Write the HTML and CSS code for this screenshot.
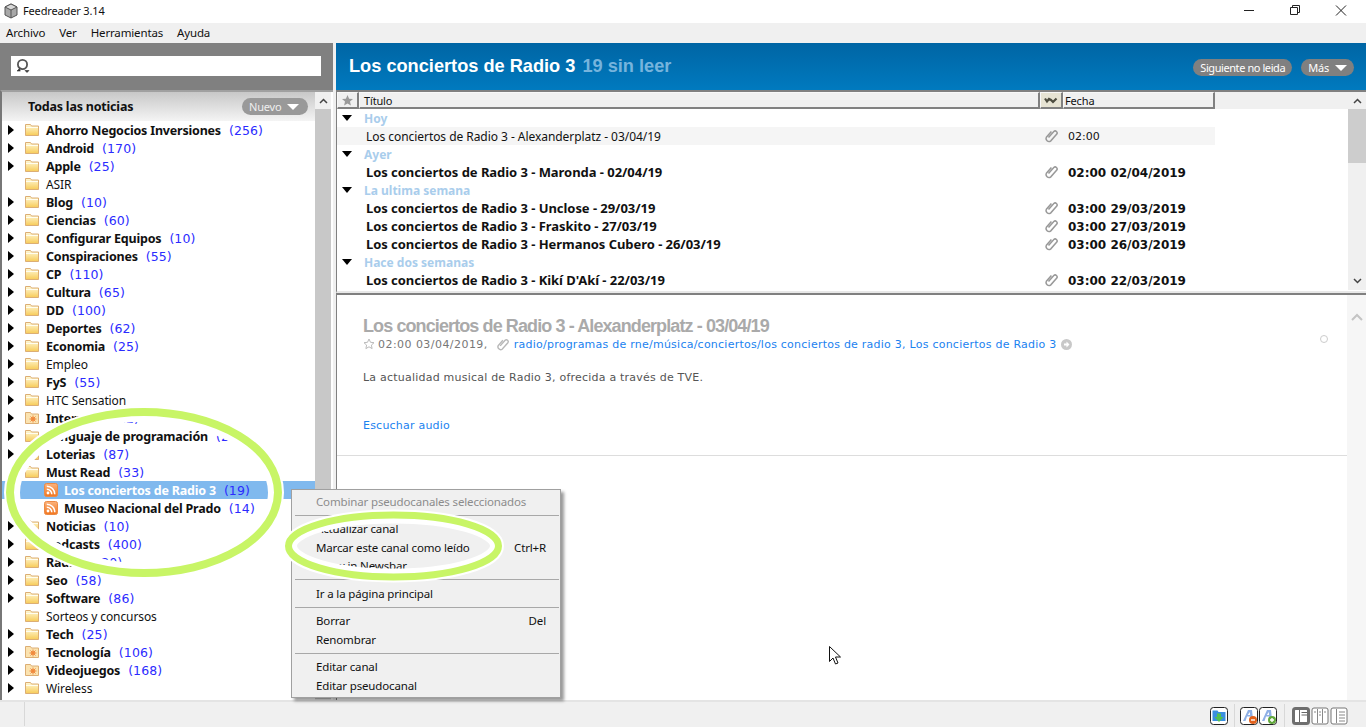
FILE: index.html
```html
<!DOCTYPE html>
<html lang="es">
<head>
    <meta charset="UTF-8">
    <title>Feedreader 3.14</title>
    <link rel="stylesheet" href="styles.css">
</head>
<body>

<svg class="defs" width="0" height="0">
    <defs>
        <linearGradient id="folderFill" x1="0" y1="0" x2="0" y2="1">
            <stop offset="0" stop-color="#fff9d8"/>
            <stop offset="1" stop-color="#f7cb58"/>
        </linearGradient>
        <linearGradient id="rssFill" x1="0" y1="0" x2="0" y2="1">
            <stop offset="0" stop-color="#fbb27c"/>
            <stop offset="1" stop-color="#f2761f"/>
        </linearGradient>
        <symbol id="folder" viewBox="0 0 14 12">
            <path d="M.5 11.500V.5h5l1 1.500h7v9.500z" fill="url(#folderFill)" stroke="#dcae74"/>
            <path d="M1 3.500h12" stroke="#fffdf0"/>
        </symbol>
        <symbol id="folderHot" viewBox="0 0 14 12">
            <path d="M.5 11.500V.5h5l1 1.500h7v9.500z" fill="#fbe3b0" stroke="#dcae74"/>
            <circle cx="8" cy="7" r="1.800" fill="#ee6a1f"/>
            <path d="M8 3.500v7M4.500 7h7M5.500 4.500l5 5M10.500 4.500l-5 5" stroke="#f08a3c"/>
        </symbol>
        <symbol id="rss" viewBox="0 0 14 14">
            <rect x=".5" y=".5" width="13" height="13" rx="2" fill="url(#rssFill)" stroke="#ec8a45"/>
            <circle cx="4" cy="10" r="1.400" fill="#fff"/>
            <path d="M2.800 6.200a5 5 0 0 1 5 5M2.800 3.200a8 8 0 0 1 8 8" fill="none" stroke="#fff" stroke-width="1.500"/>
        </symbol>
        <symbol id="clip" viewBox="0 0 14 14">
            <path d="M3.500 8.500l5.300-6a2 2 0 0 1 3 2.600l-6.200 7a3 3 0 0 1-4.200-3.900l5-5.800" fill="none" stroke="#999" stroke-width="1.500" transform="translate(1 0)"/>
        </symbol>
    </defs>
</svg>

<div class="app">
    <div class="titlebar">
        <svg class="app-icon" width="16" height="16" viewBox="0 0 16 16">
            <path d="M8 1l6 3v8l-6 3-6-3V4z" fill="#a8a8a8" stroke="#555"/>
            <path d="M2 4l6 3 6-3-6-3z" fill="#d8d8d8" stroke="#555"/>
            <path d="M8 7v8" stroke="#555"/>
        </svg>
        <span class="app-title">Feedreader 3.14</span>
        <div class="win-buttons">
            <svg class="win-btn" width="46" height="23" viewBox="0 0 46 23"><path d="M18 10.500h10" stroke="#222"/></svg>
            <svg class="win-btn" width="46" height="23" viewBox="0 0 46 23"><path d="M18.500 7.500h7v7h-7zM20.500 7.500v-2h7v7h-2" fill="none" stroke="#222"/></svg>
            <svg class="win-btn" width="46" height="23" viewBox="0 0 46 23"><path d="M18 5.500l10 10M28 5.500l-10 10" stroke="#222"/></svg>
        </div>
    </div>

    <div class="menubar">
        <span>Archivo</span>
        <span>Ver</span>
        <span>Herramientas</span>
        <span>Ayuda</span>
    </div>

    <div class="main">
        <div class="left">
            <div class="searchbar">
                <div class="searchbox">
                    <svg width="16" height="16" viewBox="0 0 16 16">
                        <circle cx="7.500" cy="6.500" r="4.600" fill="none" stroke="#555" stroke-width="1.800"/>
                        <path d="M4.500 10.500l-2.500 2.500h3.500M10 12.500h4l-2 2z" fill="#333" stroke="#333" stroke-width=".6"/>
                    </svg>
                </div>
            </div>
            <div class="tree-wrap">
                <div class="tree">
                    <div class="tree-head">
                        <span class="tree-title">Todas las noticias</span>
                        <span class="pill pill-new">Nuevo <i class="caret"></i></span>
                    </div>
                    <div class="row bold"><i class="arrow"></i><svg class="folder"><use href="#folder"/></svg>Ahorro Negocios Inversiones<b class="count">(256)</b></div>
                    <div class="row bold"><i class="arrow"></i><svg class="folder"><use href="#folder"/></svg>Android<b class="count">(170)</b></div>
                    <div class="row bold"><i class="arrow"></i><svg class="folder"><use href="#folder"/></svg>Apple<b class="count">(25)</b></div>
                    <div class="row"><i class="noarrow"></i><svg class="folder"><use href="#folder"/></svg>ASIR</div>
                    <div class="row bold"><i class="arrow"></i><svg class="folder"><use href="#folder"/></svg>Blog<b class="count">(10)</b></div>
                    <div class="row bold"><i class="arrow"></i><svg class="folder"><use href="#folder"/></svg>Ciencias<b class="count">(60)</b></div>
                    <div class="row bold"><i class="arrow"></i><svg class="folder"><use href="#folder"/></svg>Configurar Equipos<b class="count">(10)</b></div>
                    <div class="row bold"><i class="arrow"></i><svg class="folder"><use href="#folder"/></svg>Conspiraciones<b class="count">(55)</b></div>
                    <div class="row bold"><i class="arrow"></i><svg class="folder"><use href="#folder"/></svg>CP<b class="count">(110)</b></div>
                    <div class="row bold"><i class="arrow"></i><svg class="folder"><use href="#folder"/></svg>Cultura<b class="count">(65)</b></div>
                    <div class="row bold"><i class="arrow"></i><svg class="folder"><use href="#folder"/></svg>DD<b class="count">(100)</b></div>
                    <div class="row bold"><i class="arrow"></i><svg class="folder"><use href="#folder"/></svg>Deportes<b class="count">(62)</b></div>
                    <div class="row bold"><i class="arrow"></i><svg class="folder"><use href="#folder"/></svg>Economia<b class="count">(25)</b></div>
                    <div class="row"><i class="arrow"></i><svg class="folder"><use href="#folder"/></svg>Empleo</div>
                    <div class="row bold"><i class="arrow"></i><svg class="folder"><use href="#folder"/></svg>FyS<b class="count">(55)</b></div>
                    <div class="row"><i class="arrow"></i><svg class="folder"><use href="#folder"/></svg>HTC Sensation</div>
                    <div class="row bold"><i class="arrow"></i><svg class="folder"><use href="#folderHot"/></svg>Internet<b class="count">(112)</b></div>
                    <div class="row bold"><i class="arrow"></i><svg class="folder"><use href="#folder"/></svg>Lenguaje de programación<b class="count">(21)</b></div>
                    <div class="row bold"><i class="arrow"></i><svg class="folder"><use href="#folder"/></svg>Loterias<b class="count">(87)</b></div>
                    <div class="row bold"><i class="noarrow"></i><svg class="folder"><use href="#folder"/></svg>Must Read<b class="count">(33)</b></div>
                    <div class="row bold child selected"><svg class="rss"><use href="#rss"/></svg>Los conciertos de Radio 3<b class="count">(19)</b></div>
                    <div class="row bold child"><svg class="rss"><use href="#rss"/></svg>Museo Nacional del Prado<b class="count">(14)</b></div>
                    <div class="row bold"><i class="arrow"></i><svg class="folder"><use href="#folder"/></svg>Noticias<b class="count">(10)</b></div>
                    <div class="row bold"><i class="arrow"></i><svg class="folder"><use href="#folder"/></svg>Podcasts<b class="count">(400)</b></div>
                    <div class="row bold"><i class="arrow"></i><svg class="folder"><use href="#folder"/></svg>Radio<b class="count">(120)</b></div>
                    <div class="row bold"><i class="arrow"></i><svg class="folder"><use href="#folder"/></svg>Seo<b class="count">(58)</b></div>
                    <div class="row bold"><i class="arrow"></i><svg class="folder"><use href="#folder"/></svg>Software<b class="count">(86)</b></div>
                    <div class="row"><i class="noarrow"></i><svg class="folder"><use href="#folder"/></svg>Sorteos y concursos</div>
                    <div class="row bold"><i class="arrow"></i><svg class="folder"><use href="#folder"/></svg>Tech<b class="count">(25)</b></div>
                    <div class="row bold"><i class="arrow"></i><svg class="folder"><use href="#folderHot"/></svg>Tecnología<b class="count">(106)</b></div>
                    <div class="row bold"><i class="arrow"></i><svg class="folder"><use href="#folderHot"/></svg>Videojuegos<b class="count">(168)</b></div>
                    <div class="row"><i class="arrow"></i><svg class="folder"><use href="#folder"/></svg>Wireless</div>
                </div>
                <div class="tree-scroll">
                    <div class="scroll-btn">
                        <svg width="9" height="6" viewBox="0 0 9 6"><path d="M1 5l3.500-3.500L8 5" fill="none" stroke="#444" stroke-width="1.500"/></svg>
                    </div>
                    <div class="tree-thumb"></div>
                </div>
            </div>
        </div>

        <div class="right">
            <div class="feed-head">
                <span class="feed-title">Los conciertos de Radio 3</span>
                <span class="feed-unread">19 sin leer</span>
                <span class="pill pill-next">Siguiente no leida</span>
                <span class="pill pill-more">Más <i class="caret"></i></span>
            </div>

            <div class="list-pane">
                <div class="list">
                    <div class="cols">
                        <div class="col col-star">
                            <svg width="11" height="11" viewBox="0 0 11 11"><path d="M5.500 0l1.600 3.700 3.900.3-3 2.600.9 3.900-3.400-2-3.400 2 .9-3.900-3-2.600 3.900-.3z" fill="#9a9a9a"/></svg>
                        </div>
                        <div class="col col-title">Título</div>
                        <div class="col col-clip">
                            <svg width="14" height="9" viewBox="0 0 14 9"><path d="M1 2.500l2 3 2-2.500 2 1 2 2 3.500-3.500" fill="none" stroke="#4d4d40" stroke-width="2.200"/></svg>
                        </div>
                        <div class="col col-date">Fecha</div>
                    </div>
                    <div class="item group"><i class="down"></i>Hoy</div>
                    <div class="item read"><span class="item-title">Los conciertos de Radio 3 - Alexanderplatz - 03/04/19</span><svg class="clip"><use href="#clip"/></svg><span class="item-date">02:00</span></div>
                    <div class="item group"><i class="down"></i>Ayer</div>
                    <div class="item unread"><span class="item-title">Los conciertos de Radio 3 - Maronda - 02/04/19</span><svg class="clip"><use href="#clip"/></svg><span class="item-date">02:00 02/04/2019</span></div>
                    <div class="item group"><i class="down"></i>La ultima semana</div>
                    <div class="item unread"><span class="item-title">Los conciertos de Radio 3 - Unclose - 29/03/19</span><svg class="clip"><use href="#clip"/></svg><span class="item-date">03:00 29/03/2019</span></div>
                    <div class="item unread"><span class="item-title">Los conciertos de Radio 3 - Fraskito - 27/03/19</span><svg class="clip"><use href="#clip"/></svg><span class="item-date">03:00 27/03/2019</span></div>
                    <div class="item unread"><span class="item-title">Los conciertos de Radio 3 - Hermanos Cubero - 26/03/19</span><svg class="clip"><use href="#clip"/></svg><span class="item-date">03:00 26/03/2019</span></div>
                    <div class="item group"><i class="down"></i>Hace dos semanas</div>
                    <div class="item unread"><span class="item-title">Los conciertos de Radio 3 - Kikí D'Akí - 22/03/19</span><svg class="clip"><use href="#clip"/></svg><span class="item-date">03:00 22/03/2019</span></div>
                </div>
                <div class="list-scroll">
                    <div class="scroll-btn">
                        <svg width="9" height="6" viewBox="0 0 9 6"><path d="M1 5l3.500-3.500L8 5" fill="none" stroke="#444" stroke-width="1.500"/></svg>
                    </div>
                    <div class="list-thumb"></div>
                    <div class="scroll-btn scroll-btn-end">
                        <svg width="9" height="6" viewBox="0 0 9 6"><path d="M1 1l3.500 3.500L8 1" fill="none" stroke="#444" stroke-width="1.500"/></svg>
                    </div>
                </div>
            </div>

            <div class="preview-pane">
                <div class="preview">
                    <div class="article">
                        <h1 class="art-title">Los conciertos de Radio 3 - Alexanderplatz - 03/04/19</h1>
                        <div class="art-meta">
                            <svg class="art-star" width="12" height="12" viewBox="0 0 12 12"><path d="M6 1l1.500 3.300 3.500.4-2.600 2.400.7 3.500L6 8.800l-3.100 1.800.7-3.500L1 4.700l3.500-.4z" fill="none" stroke="#bbb"/></svg>
                            <span class="art-date">02:00 03/04/2019,</span>
                            <svg class="art-clip"><use href="#clip"/></svg>
                            <a>radio/programas de rne/música/conciertos/los conciertos de radio 3, Los conciertos de Radio 3</a>
                            <svg class="art-go" width="11" height="11" viewBox="0 0 11 11"><circle cx="5.500" cy="5.500" r="5.500" fill="#c8c8c8"/><path d="M3 4.500h2.500V2.500l3 3-3 3v-2H3z" fill="#fff"/></svg>
                        </div>
                        <p class="art-text">La actualidad musical de Radio 3, ofrecida a través de TVE.</p>
                        <a class="art-link">Escuchar audio</a>
                        <i class="art-dot"></i>
                    </div>
                </div>
                <div class="preview-scroll">
                    <svg width="12" height="8" viewBox="0 0 12 8"><path d="M1 7l5-5 5 5" fill="none" stroke="#c4c4c4" stroke-width="2"/></svg>
                </div>
            </div>
        </div>
    </div>

    <div class="statusbar">
        <i class="status-sep status-sep-first"></i>
        <svg class="tool" width="18" height="18" viewBox="0 0 18 18"><rect x=".5" y=".5" width="17" height="17" rx="3" fill="#fff" stroke="#222"/><path d="M2.500 3.500h5l1 1.500h7v9h-13z" fill="#3a8fe0"/><path d="M7 6.500h4v3.500h2.500L9 15l-4.500-5H7z" fill="#52c052"/></svg>
        <i class="status-sep status-sep-tight"></i>
        <svg class="tool" width="18" height="18" viewBox="0 0 18 18"><rect x=".5" y=".5" width="17" height="17" rx="3" fill="#fff" stroke="#222"/><path d="M3 14L8 3h4l1 9h-2.500l-.2-2.500H7L5.500 14zM7.800 8h2.300l-.3-3z" fill="#8fb0e6"/><circle cx="13" cy="13" r="4" fill="#e2611c"/><path d="M11 13h4" stroke="#fff" stroke-width="1.400"/></svg>
        <svg class="tool" width="18" height="18" viewBox="0 0 18 18"><rect x=".5" y=".5" width="17" height="17" rx="3" fill="#fff" stroke="#222"/><path d="M3 14L8 3h4l1 9h-2.500l-.2-2.500H7L5.500 14zM7.800 8h2.300l-.3-3z" fill="#8fb0e6"/><circle cx="13" cy="13" r="4" fill="#62a83c"/><path d="M11 13h4M13 11v4" stroke="#fff" stroke-width="1.400"/></svg>
        <i class="status-sep"></i>
        <svg class="tool" width="18" height="18" viewBox="0 0 18 18"><rect x="1.500" y="1.500" width="15" height="15" rx="2" fill="#fff" stroke="#6e6e6e" stroke-width="3"/><path d="M7.500 3v12M9.500 5.500h5.500M9.500 8h5.500" stroke="#666"/></svg>
        <svg class="tool" width="18" height="18" viewBox="0 0 18 18"><rect x="1" y="1" width="16" height="16" rx="2" fill="#fff" stroke="#777"/><path d="M6.500 2v14M11.500 2v14M3 5h2M13 5h2M8 5h2M8 8h2" stroke="#888"/></svg>
        <svg class="tool" width="18" height="18" viewBox="0 0 18 18"><rect x="1" y="1" width="16" height="16" rx="2" fill="#fff" stroke="#777"/><path d="M6.500 2v14M9 5h6M9 8h6M9 11h6M9 14h6" stroke="#888"/></svg>
    </div>
</div>

<div class="menu">
    <div class="menu-item disabled">Combinar pseudocanales seleccionados</div>
    <hr class="menu-sep">
    <div class="menu-item">Actualizar canal</div>
    <div class="menu-item">Marcar este canal como leído<span class="shortcut">Ctrl+R</span></div>
    <div class="menu-item">Show in Newsbar</div>
    <hr class="menu-sep">
    <div class="menu-item">Ir a la página principal</div>
    <hr class="menu-sep">
    <div class="menu-item">Borrar<span class="shortcut">Del</span></div>
    <div class="menu-item">Renombrar</div>
    <hr class="menu-sep">
    <div class="menu-item">Editar canal</div>
    <div class="menu-item">Editar pseudocanal</div>
</div>

<!-- hand drawn highlights that were painted on top of the window -->
<svg class="marks" width="1366" height="727" viewBox="0 0 1366 727">
    <ellipse cx="144" cy="492.500" rx="132" ry="78.500" fill="none" stroke="#fff" stroke-width="16"/>
    <ellipse cx="144" cy="492.500" rx="134" ry="80.500" fill="none" stroke="#c8f566" stroke-width="8"/>
    <ellipse cx="393.500" cy="546" rx="103.500" ry="29.500" fill="none" stroke="#fff" stroke-width="14"/>
    <ellipse cx="393.500" cy="546" rx="105" ry="31" fill="none" stroke="#c8f566" stroke-width="7"/>
    <path d="M829.500 646.500v15l3.500-3.500 2.500 6 2.500-1-2.500-6h5z" fill="#fff" stroke="#111"/>
</svg>

</body>
</html>
```

FILE: styles.css
```css
* {
    box-sizing: border-box;
}

html, body {
    margin: 0;
    height: 100%;
    overflow: hidden;
}

body {
    position: relative;
    font-family: "Noto Sans", "DejaVu Sans", sans-serif;
    font-size: 11.5px;
    letter-spacing: -.15px;
    color: #111;
    background: #f0f0f0;
}

.defs {
    position: absolute;
}

.app {
    display: flex;
    flex-direction: column;
    height: 727px;
}

/* title bar */
.titlebar {
    display: flex;
    align-items: center;
    height: 23px;
    padding-left: 3px;
    padding-bottom: 2px;
    background: #fff;
}

.app-icon {
    margin-right: 4px;
}

.app-title {
    font-size: 11px;
}

.win-buttons {
    display: flex;
    align-self: flex-start;
    margin-left: auto;
    margin-right: 2px;
}

.win-btn {
    display: block;
}

/* menu bar */
.menubar {
    display: flex;
    align-items: center;
    gap: 14px;
    height: 20px;
    padding-left: 6px;
    padding-bottom: 2px;
    background: #f0f0f0;
}

.main {
    display: flex;
    flex: 1;
    min-height: 0;
}

/* left side */
.left {
    display: flex;
    flex-direction: column;
    width: 333px;
}

.searchbar {
    height: 47px;
    padding: 13px 12px 0 11px;
    background: #808080;
}

.searchbox {
    display: flex;
    align-items: center;
    height: 20px;
    padding-left: 4px;
    background: #fff;
}

.tree-wrap {
    display: flex;
    flex: 1;
    min-height: 0;
    padding-right: 2px;
    overflow: hidden;
    background: #fff;
    border-top: 2px solid #a0a0a0;
    border-left: 2px solid #777;
}

.tree {
    flex: 1;
    min-width: 0;
}

.tree-head {
    display: flex;
    align-items: center;
    height: 29px;
    padding: 0 7px 0 26px;
    background: linear-gradient(#c8c8c8, #f4f4f4);
}

.tree-title {
    font-size: 12.500px;
    font-weight: bold;
    letter-spacing: -.2px;
}

.pill {
    display: inline-flex;
    align-items: center;
    height: 17px;
    border-radius: 9px;
    color: #fff;
    background: #808080;
    font-size: 11px;
    letter-spacing: -.2px;
}

.pill-new {
    margin-left: auto;
    width: 66px;
    padding-left: 7px;
    color: #eee;
    background: #999;
}

.caret {
    width: 0;
    height: 0;
    margin-left: 6px;
    border-left: 6px solid transparent;
    border-right: 6px solid transparent;
    border-top: 6px solid #fff;
}

.row {
    display: flex;
    align-items: center;
    height: 18px;
    white-space: nowrap;
    font-size: 12px;
    letter-spacing: -.1px;
}

.row.bold {
    font-size: 12.500px;
    font-weight: bold;
    letter-spacing: -.2px;
}

.row.child {
    padding-left: 42px;
}

.row.selected {
    color: #fff;
    background: #80b9ee;
}

.arrow {
    width: 0;
    height: 0;
    margin-left: 6px;
    margin-right: 11px;
    border-top: 5px solid transparent;
    border-bottom: 5px solid transparent;
    border-left: 6px solid #000;
}

.noarrow {
    width: 23px;
}

.folder {
    width: 14px;
    height: 12px;
    margin-right: 7px;
    flex: none;
}

.rss {
    width: 14px;
    height: 14px;
    margin-right: 6px;
    flex: none;
}

.count {
    margin-left: 8px;
    color: #2b2bff;
    font-family: "DejaVu Sans", sans-serif;
    font-size: 12.500px;
    font-weight: normal;
    letter-spacing: .1px;
}

.tree-scroll {
    width: 16px;
    background: #f0f0f0;
}

.scroll-btn {
    display: flex;
    align-items: center;
    justify-content: center;
    height: 17px;
    background: #f0f0f0;
}

.tree-thumb {
    height: 590px;
    background: #c8c8c8;
}

/* right side */
.right {
    display: flex;
    flex: 1;
    flex-direction: column;
    min-width: 0;
    margin-left: 3px;
}

.feed-head {
    display: flex;
    align-items: center;
    height: 47px;
    padding: 0 12px 0 13px;
    background: linear-gradient(#0065a4, #007abf);
    font-weight: bold;
    font-size: 18.200px;
    letter-spacing: 0;
}

.feed-title {
    font-family: "Liberation Sans", sans-serif;
    color: #fff;
}

.feed-unread {
    margin-left: 7px;
    font-family: "Liberation Sans", sans-serif;
    color: #76b4dd;
}

.pill-next {
    margin-left: auto;
    margin-top: 2px;
    padding: 0 7px;
    font-weight: normal;
    letter-spacing: -.42px;
}

.pill-more {
    margin-left: 9px;
    margin-top: 2px;
    padding: 0 7px;
    font-weight: normal;
}

.list-pane {
    display: flex;
    flex: none;
    height: 203px;
    padding-bottom: 1px;
    border-top: 2px solid #808080;
    border-left: 1px solid #808080;
    border-bottom: 2px solid #e8e8e8;
    background: #fff;
}

.list {
    flex: 1;
    min-width: 0;
}

.cols {
    display: flex;
    height: 17px;
    background: #f0f0f0;
}

.col {
    display: flex;
    align-items: center;
    padding-left: 4px;
    border: 1px solid #f8f8f8;
    border-right: 2px solid #808080;
    border-bottom: 2px solid #808080;
    font-size: 11px;
}

.col-star {
    width: 22px;
    justify-content: center;
    padding-left: 0;
}

.col-title {
    width: 681px;
}

.col-clip {
    width: 23px;
    justify-content: center;
    padding-left: 0;
    background: #e6e3d3;
}

.col-date {
    width: 152px;
    padding-left: 1px;
}

.item {
    display: flex;
    align-items: center;
    width: 878px;
    height: 18px;
    white-space: nowrap;
}

.group {
    padding-left: 5px;
    color: #a9cdec;
    font-size: 12px;
    font-weight: bold;
    letter-spacing: 0;
}

.down {
    width: 0;
    height: 0;
    margin-right: 12px;
    border-left: 5px solid transparent;
    border-right: 5px solid transparent;
    border-top: 6px solid #000;
}

.read {
    background: #f5f5f5;
}

.unread {
    font-weight: bold;
    font-size: 13px;
    letter-spacing: -.05px;
}

.item-title {
    width: 707px;
    padding-left: 29px;
}

.clip {
    width: 14px;
    height: 14px;
    flex: none;
}

.item-date {
    margin-left: 10px;
    padding-top: 1px;
    font-family: "DejaVu Sans", sans-serif;
    font-size: 12px;
    letter-spacing: 0;
}

.read .item-title {
    font-size: 12px;
    letter-spacing: -.05px;
}

.read .item-date {
    font-size: 11px;
}

.list-scroll {
    display: flex;
    flex-direction: column;
    width: 18px;
    background: #f0f0f0;
}

.list-thumb {
    height: 54px;
    background: #cdcdcd;
}

.scroll-btn-end {
    margin-top: auto;
    height: 18px;
}

.preview-pane {
    display: flex;
    flex: 1;
    min-height: 0;
    border-top: 2px solid #808080;
    border-left: 1px solid #808080;
    background: #fff;
}

.preview {
    flex: 1;
    min-width: 0;
}

.article {
    position: relative;
    height: 161px;
    padding: 21px 0 0 26px;
    border-bottom: 1px solid #ddd;
    font-family: "DejaVu Sans", sans-serif;
    font-size: 11px;
    letter-spacing: .22px;
    color: #555;
}

.art-title {
    margin: 0;
    font-family: "Liberation Sans", sans-serif;
    font-size: 18px;
    line-height: 21px;
    letter-spacing: -.9px;
    color: #aaa;
}

.art-meta {
    display: flex;
    align-items: center;
    height: 16px;
    margin-top: -1px;
    color: #777;
}

.art-date {
    letter-spacing: .45px;
}

.art-meta a {
    margin-right: 4px;
    letter-spacing: .24px;
}

.art-star {
    margin-right: 3px;
}

.art-clip {
    width: 13px;
    height: 13px;
    margin: 0 5px 0 8px;
    opacity: .7;
}

.art-text {
    margin: 18px 0 0;
    line-height: 16px;
}

a {
    color: #1a82f0;
}

.art-link {
    display: block;
    margin-top: 32px;
    line-height: 16px;
}

.art-dot {
    position: absolute;
    top: 40px;
    right: 19px;
    width: 8px;
    height: 8px;
    border: 1px solid #ccc;
    border-radius: 50%;
}

.preview-scroll {
    display: flex;
    justify-content: center;
    width: 19px;
    padding-top: 18px;
    background: #f6f6f6;
}

/* status bar */
.statusbar {
    display: flex;
    align-items: center;
    justify-content: flex-end;
    flex: none;
    gap: 1px;
    height: 27px;
    padding-right: 18px;
    padding-top: 3px;
    background: #f0f0f0;
    border-top: 2px solid #e4e4e4;
    position: relative;
}

.status-sep {
    width: 1px;
    height: 24px;
    margin: 0 6px;
    background: #d8d8d8;
}

.status-sep-tight {
    margin: 0 4px 0 5px;
}

.status-sep-first {
    position: absolute;
    left: 24px;
    top: 0;
    margin: 0;
}

.tool {
    display: block;
}

/* context menu */
.menu {
    position: absolute;
    left: 291px;
    top: 489px;
    width: 270px;
    height: 209px;
    padding: 2px 14px 0 2px;
    background: #f0f0f0;
    border: 1px solid #a0a0a0;
    box-shadow: 3px 3px 3px rgba(0, 0, 0, .4);
}

.menu-item {
    display: flex;
    align-items: center;
    justify-content: space-between;
    height: 18.500px;
    padding-left: 22px;
    white-space: nowrap;
}

.disabled {
    color: #8c8c8c;
}

.menu-sep {
    margin: 4px 0 4px 1px;
    width: 264px;
    height: 1px;
    border: 0;
    background: #a8a8a8;
}

.marks {
    position: absolute;
    left: 0;
    top: 0;
    pointer-events: none;
}
```
